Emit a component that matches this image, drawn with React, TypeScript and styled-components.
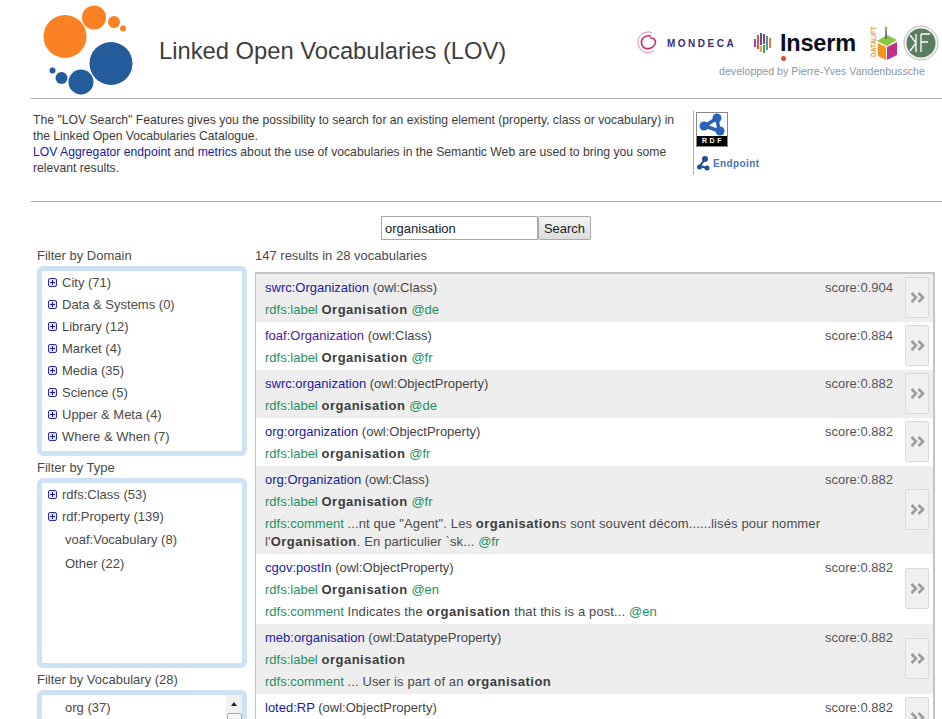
import styled, { createGlobalStyle } from "styled-components"

const GlobalStyle = createGlobalStyle`
  html, body {
    margin: 0;
    height: 100%;
    overflow: hidden;
    background: #fff;
  }
  body {
    font-family: "Liberation Sans", Arial, sans-serif;
    font-size: 13px;
    color: #444;
  }
  * {
    box-sizing: border-box;
  }
`

const Page = styled.div`
  width: 942px;
  height: 719px;
  overflow: hidden;
`

const Header = styled.header`
  display: flex;
  margin-left: 31px;
  height: 99px;
  border-bottom: 1px solid #b0b0b0;
`

const LogoMark = styled.svg`
  width: 128px;
  height: 98px;
  flex: none;
`

const SiteTitle = styled.h1`
  margin: 37px 0 0 0;
  font-size: 23.75px;
  font-weight: normal;
  line-height: 28px;
  color: #3d3d3d;
  white-space: nowrap;
`

const Partners = styled.div`
  margin-left: auto;
  width: 305px;
  padding-top: 24px;
  flex: none;
`

const PartnerLogos = styled.div`
  display: flex;
  align-items: center;
  height: 38px;
`

const MondecaName = styled.span`
  width: 72px;
  margin-left: 10px;
  font-size: 10px;
  font-weight: bold;
  letter-spacing: 2.5px;
  color: #3b2a7a;
  white-space: nowrap;
  flex: none;
`

const InsermMark = styled.div`
  display: flex;
  align-items: center;
  margin-left: 15px;
  gap: 9px;
`

const InsermName = styled.span`
  position: relative;
  font-size: 23.5px;
  font-weight: bold;
  letter-spacing: -0.2px;
  color: #0a1020;

  &::after {
    content: "";
    position: absolute;
    left: 1px;
    bottom: -4px;
    width: 5px;
    height: 5px;
    border-radius: 50%;
    background: #e04a2a;
  }
`

const Credit = styled.div`
  margin: 2px 0 0 82px;
  font-size: 10.67px;
  line-height: 14px;
  color: #8a96a8;
  white-space: nowrap;
`

const Intro = styled.section`
  display: flex;
  margin-left: 31px;
  height: 103px;
  border-bottom: 1px solid #b0b0b0;
  padding-top: 12px;
`

const IntroText = styled.p`
  margin: 1px 0 0 2px;
  width: 660px;
  flex: none;
  font-size: 12.2px;
  line-height: 16px;
  color: #3c3c3c;
`

const IntroLink = styled.a`
  color: #1a1a9e;
`

const EndpointBox = styled.div`
  height: 64px;
  padding-left: 2px;
  border-left: 1px solid #b0b0b0;
`

const RdfIcon = styled.div`
  width: 32px;
  height: 35px;
  margin: 1px 0 8px 0;
  border: 1px solid #888;
  background: #fff;
  overflow: hidden;
`

const RdfLabel = styled.div`
  background: #000;
  color: #fff;
  font-size: 7px;
  font-weight: bold;
  letter-spacing: 2.5px;
  line-height: 10px;
  text-align: center;
  padding-left: 2px;
`

const EndpointLink = styled.a`
  display: flex;
  align-items: center;
  gap: 3px;
  font-size: 10px;
  font-weight: bold;
  letter-spacing: 0.4px;
  color: #4a74b4;
`

const SearchForm = styled.form`
  display: flex;
  justify-content: center;
  margin-top: 14px;
  padding-left: 30px;
  height: 25px;
`

const SearchInput = styled.input`
  width: 157px;
  height: 24px;
  border: 1px solid #a9a9a9;
  padding: 0 3px;
  font-family: "Liberation Sans", Arial, sans-serif;
  font-size: 13px;
  color: #222;
  outline: none;
`

const SearchButton = styled.button`
  width: 53px;
  height: 24px;
  padding: 0;
  border: 1px solid #aaa;
  border-radius: 2px;
  background: linear-gradient(#f4f4f4, #dcdcdc);
  font-family: "Liberation Sans", Arial, sans-serif;
  font-size: 13px;
  color: #222;
`

const Columns = styled.div`
  display: flex;
  margin-top: 3px;
`

const Sidebar = styled.aside`
  width: 218px;
  margin-left: 37px;
  flex: none;
`

const FilterTitle = styled.div`
  height: 22px;
  font-size: 13px;
  line-height: 23px;
  color: #4a4a4a;
`

const FilterBox = styled.div`
  position: relative;
  width: 210px;
  height: 190px;
  padding: 0 0 0 6px;
  border: 5px solid #cfe2f5;
  border-radius: 6px;
  overflow: hidden;
`

const FilterRow = styled.div<{ $tall?: boolean }>`
  display: flex;
  align-items: center;
  height: ${(p) => (p.$tall ? 24 : 22)}px;
  font-size: 13px;
  color: #4a4a4a;
  white-space: nowrap;
`

const Expander = styled.span`
  display: flex;
  align-items: center;
  justify-content: center;
  width: 9px;
  height: 9px;
  margin-right: 5px;
  border: 1px solid #2a2ab0;
  border-radius: 2px;
  background: #e6e6f6;
  flex: none;
`

const LeafSpacer = styled.span`
  width: 17px;
  flex: none;
`

const Scrollbar = styled.div`
  position: absolute;
  top: 0;
  right: 0;
  bottom: 0;
  width: 16px;
  background: #f0f0f0;
  display: flex;
  flex-direction: column;
  align-items: center;
  padding-top: 7px;
`

const ScrollArrow = styled.span`
  width: 0;
  height: 0;
  border-left: 3px solid transparent;
  border-right: 3px solid transparent;
  border-bottom: 4px solid #222;
`

const ScrollThumb = styled.span`
  width: 15px;
  height: 30px;
  margin-top: 7px;
  border: 1px solid #aaa;
  border-radius: 2px;
  background: linear-gradient(#f8f8f8, #ddd);
`

const Results = styled.main`
  width: 680px;
  flex: none;
`

const ResultCount = styled.div`
  height: 28px;
  font-size: 13px;
  line-height: 23px;
  color: #4a4a4a;
`

const ResultPanel = styled.div`
  width: 680px;
  height: 460px;
  border: 2px solid #c4c4c4;
  border-bottom: none;
  border-left-width: 1px;
  overflow: hidden;
`

const ResultRow = styled.div<{ $shaded: boolean }>`
  display: flex;
  background: ${(p) => (p.$shaded ? "#eeeeee" : "#fff")};
  padding: 3px 4px 1px 9px;
`

const ResultBody = styled.div`
  flex: 1;
  min-width: 0;
`

const ResultHead = styled.div`
  display: flex;
  justify-content: space-between;
  padding-right: 12px;
  line-height: 22px;
`

const ResultLine = styled.div<{ $comment: boolean }>`
  font-size: 13px;
  line-height: ${(p) => (p.$comment ? 18 : 22)}px;
  padding: ${(p) => (p.$comment ? "2px 72px 2px 0" : "0 72px 0 0")};
  color: #4a4a4a;
`

const ResultUri = styled.a<{ $visited?: boolean }>`
  color: ${(p) => (p.$visited ? "#4b1a9a" : "#1a1a9e")};
`

const Predicate = styled.span`
  color: #1f8f5f;
`

const Match = styled.b`
  letter-spacing: 0.5px;
  color: #3d3d3d;
`

const Prose = styled.span`
  letter-spacing: 0.12px;
`

const Score = styled.span`
  color: #555;
`

const DetailButton = styled.button`
  align-self: center;
  display: flex;
  align-items: center;
  justify-content: center;
  width: 24px;
  height: 41px;
  margin-bottom: 3px;
  padding: 0;
  border: 1px solid #dadada;
  border-radius: 2px;
  background: #f0f0f0;
  flex: none;
`

type Part = { t: string; b?: boolean; g?: boolean }

type Result = {
  uri: string
  kind: string
  score: string
  visited?: boolean
  lines: Part[][]
}

const label = (word: string, lang?: string): Part[] => [
  { t: "rdfs:label", g: true },
  { t: " " },
  { t: word, b: true },
  ...(lang ? [{ t: " " }, { t: lang, g: true }] : []),
]

const results: Result[] = [
  { uri: "swrc:Organization", kind: "(owl:Class)", score: "0.904", lines: [label("Organisation", "@de")] },
  { uri: "foaf:Organization", kind: "(owl:Class)", score: "0.884", visited: true, lines: [label("Organisation", "@fr")] },
  { uri: "swrc:organization", kind: "(owl:ObjectProperty)", score: "0.882", lines: [label("organisation", "@de")] },
  { uri: "org:organization", kind: "(owl:ObjectProperty)", score: "0.882", lines: [label("organisation", "@fr")] },
  {
    uri: "org:Organization",
    kind: "(owl:Class)",
    score: "0.882",
    lines: [
      label("Organisation", "@fr"),
      [
        { t: "rdfs:comment", g: true },
        { t: ' ...nt que "Agent". Les ' },
        { t: "organisation", b: true },
        { t: "s sont souvent décom......lisés pour nommer l'" },
        { t: "Organisation", b: true },
        { t: ". En particulier `sk... " },
        { t: "@fr", g: true },
      ],
    ],
  },
  {
    uri: "cgov:postIn",
    kind: "(owl:ObjectProperty)",
    score: "0.882",
    lines: [
      label("Organisation", "@en"),
      [
        { t: "rdfs:comment", g: true },
        { t: " Indicates the " },
        { t: "organisation", b: true },
        { t: " that this is a post... " },
        { t: "@en", g: true },
      ],
    ],
  },
  {
    uri: "meb:organisation",
    kind: "(owl:DatatypeProperty)",
    score: "0.882",
    lines: [
      label("organisation"),
      [
        { t: "rdfs:comment", g: true },
        { t: " ... User is part of an " },
        { t: "organisation", b: true },
      ],
    ],
  },
  { uri: "loted:RP", kind: "(owl:ObjectProperty)", score: "0.882", lines: [label("organisation")] },
]

const domains = ["City (71)", "Data & Systems (0)", "Library (12)", "Market (4)", "Media (35)", "Science (5)", "Upper & Meta (4)", "Where & When (7)"]

function PlusIcon() {
  return (
    <Expander>
      <svg width="7" height="7" viewBox="0 0 7 7">
        <path d="M3.5 1v5M1 3.5h5" stroke="#1a1a9e" strokeWidth="1" />
      </svg>
    </Expander>
  )
}

function Chevrons() {
  return (
    <svg width="15" height="11" viewBox="0 0 15 11">
      <path d="M1.5 1l4.500 4.500-4.500 4.500M8.500 1l4.500 4.500-4.500 4.500" fill="none" stroke="#9c9c9c" strokeWidth="2.6" />
    </svg>
  )
}

export default function App() {
  return (
    <Page>
      <GlobalStyle />
      <Header>
        <LogoMark viewBox="31 0 128 98">
          <circle cx="65" cy="36.5" r="21.5" fill="#fa8225" />
          <circle cx="94" cy="17.5" r="12" fill="#fa8225" />
          <circle cx="114" cy="22" r="6" fill="#fa8225" />
          <circle cx="123" cy="28.5" r="3" fill="#fa8225" />
          <circle cx="111" cy="63.5" r="21.5" fill="#245b9a" />
          <circle cx="81" cy="82" r="12.5" fill="#245b9a" />
          <circle cx="61.5" cy="78" r="6" fill="#245b9a" />
          <circle cx="52.5" cy="70.5" r="3" fill="#245b9a" />
        </LogoMark>
        <SiteTitle>Linked Open Vocabularies (LOV)</SiteTitle>
        <Partners>
          <PartnerLogos>
            <svg width="20" height="26" viewBox="0 0 20 26" style={{ flex: "none" }}>
              <path d="M15 2.5C7 0 0 6 1 13.5c1 8 10 12 16 7" fill="none" stroke="#e88aaa" strokeWidth="1" />
              <path d="M14 6C7 4.500 3 10 5 15c2 5 10 5 13-1 1.500-3.500-1-6.500-5-6" fill="none" stroke="#c8285f" strokeWidth="1.6" />
            </svg>
            <MondecaName>MONDECA</MondecaName>
            <InsermMark>
              <svg width="17" height="20" viewBox="0 0 17 20" style={{ flex: "none" }}>
                <rect x="0" y="6" width="2" height="8" fill="#b0408a" />
                <rect x="3" y="2" width="2" height="14" fill="#e0503a" />
                <rect x="6" y="0" width="2" height="12" fill="#3a60b0" />
                <rect x="6" y="13" width="2" height="6" fill="#e8a030" />
                <rect x="9" y="1" width="2" height="10" fill="#c03070" />
                <rect x="9" y="12" width="2" height="8" fill="#50a050" />
                <rect x="12" y="3" width="2" height="14" fill="#40a0a0" />
                <rect x="15" y="5" width="2" height="10" fill="#e08030" />
              </svg>
              <InsermName>Inserm</InsermName>
            </InsermMark>
            <svg width="28" height="34" viewBox="0 0 28 34" style={{ flex: "none", marginLeft: 14 }}>
              <text x="0" y="0" transform="translate(6 31) rotate(-90)" fontFamily="Liberation Sans" fontSize="6.5" fontWeight="bold" fill="#f7941d">
                DATALIFT
              </text>
              <path d="M7 15l10-6 10 5-10 6z" fill="#8cc63f" />
              <path d="M8 17l8 4v13l-8-4z" fill="#f7941d" />
              <path d="M17 21l10-5v13l-10 5z" fill="#c2308f" />
              <path d="M16 1v12" stroke="#557" strokeWidth="1.5" />
              <circle cx="16" cy="3" r="1.5" fill="#8cc63f" />
            </svg>
            <svg width="36" height="36" viewBox="0 0 36 36" style={{ flex: "none", marginLeft: 5 }}>
              <circle cx="18" cy="18" r="17" fill="#f2f2f2" stroke="#bbb" strokeWidth="1" />
              <circle cx="18" cy="18" r="14.5" fill="#5b7d5f" />
              <path d="M13 9v18M13 18L7 10M13 18L7 26M18 9v18M18 9h9M18 17h7" fill="none" stroke="#fff" strokeWidth="1.3" />
            </svg>
          </PartnerLogos>
          <Credit>developped by Pierre-Yves Vandenbussche</Credit>
        </Partners>
      </Header>

      <Intro>
        <IntroText>
          The "LOV Search" Features gives you the possibility to search for an existing element (property, class or vocabulary) in the Linked Open Vocabularies Catalogue.
          <br />
          <IntroLink>LOV Aggregator endpoint</IntroLink> and <IntroLink>metrics</IntroLink> about the use of vocabularies in the Semantic Web are used to bring you some relevant results.
        </IntroText>
        <EndpointBox>
          <RdfIcon>
            <svg width="30" height="23" viewBox="0 0 30 23" style={{ display: "block" }}>
              <path d="M20 5L8 13l14 5z" fill="none" stroke="#2a62b8" strokeWidth="3.5" />
              <circle cx="20" cy="5" r="4.5" fill="#2a62b8" />
              <circle cx="7" cy="13" r="4.5" fill="#2a62b8" />
              <circle cx="23" cy="18" r="4.5" fill="#2a62b8" />
            </svg>
            <RdfLabel>RDF</RdfLabel>
          </RdfIcon>
          <EndpointLink>
            <svg width="14" height="16" viewBox="0 0 14 16">
              <path d="M9 4L4 11l7 2" fill="none" stroke="#1f4f90" strokeWidth="2" />
              <circle cx="9" cy="4" r="3" fill="#1f4f90" />
              <circle cx="3.500" cy="12" r="2.500" fill="#1f4f90" />
              <circle cx="11" cy="13" r="2.500" fill="#1f4f90" />
            </svg>
            Endpoint
          </EndpointLink>
        </EndpointBox>
      </Intro>

      <SearchForm>
        <SearchInput defaultValue="organisation" />
        <SearchButton type="button">Search</SearchButton>
      </SearchForm>

      <Columns>
        <Sidebar>
          <FilterTitle>Filter by Domain</FilterTitle>
          <FilterBox>
            {domains.map((d) => (
              <FilterRow key={d}>
                <PlusIcon />
                {d}
              </FilterRow>
            ))}
          </FilterBox>
          <FilterTitle>Filter by Type</FilterTitle>
          <FilterBox>
            <FilterRow>
              <PlusIcon />
              rdfs:Class (53)
            </FilterRow>
            <FilterRow>
              <PlusIcon />
              rdf:Property (139)
            </FilterRow>
            <FilterRow $tall>
              <LeafSpacer />
              voaf:Vocabulary (8)
            </FilterRow>
            <FilterRow $tall>
              <LeafSpacer />
              Other (22)
            </FilterRow>
          </FilterBox>
          <FilterTitle>Filter by Vocabulary (28)</FilterTitle>
          <FilterBox>
            <FilterRow $tall>
              <LeafSpacer />
              org (37)
            </FilterRow>
            <Scrollbar>
              <ScrollArrow />
              <ScrollThumb />
            </Scrollbar>
          </FilterBox>
        </Sidebar>

        <Results>
          <ResultCount>147 results in 28 vocabularies</ResultCount>
          <ResultPanel>
            {results.map((r, i) => (
              <ResultRow key={r.uri} $shaded={i % 2 === 0}>
                <ResultBody>
                  <ResultHead>
                    <span>
                      <ResultUri $visited={r.visited}>{r.uri}</ResultUri> {r.kind}
                    </span>
                    <Score>score:{r.score}</Score>
                  </ResultHead>
                  {r.lines.map((line, j) => (
                    <ResultLine key={j} $comment={j > 0}>
                      {line.map((p, k) =>
                        p.b ? <Match key={k}>{p.t}</Match> : p.g ? <Predicate key={k}>{p.t}</Predicate> : <Prose key={k}>{p.t}</Prose>
                      )}
                    </ResultLine>
                  ))}
                </ResultBody>
                <DetailButton type="button">
                  <Chevrons />
                </DetailButton>
              </ResultRow>
            ))}
          </ResultPanel>
        </Results>
      </Columns>
    </Page>
  )
}
